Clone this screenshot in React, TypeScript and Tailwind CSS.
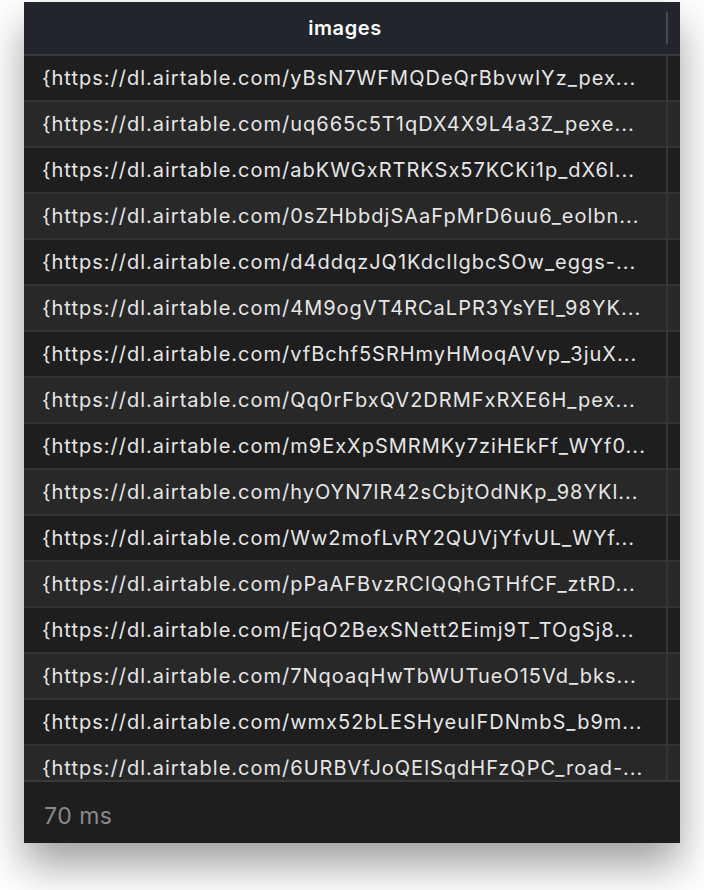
import React from "react";

const rows = [
  "{https://dl.airtable.com/yBsN7WFMQDeQrBbvwlYz_pex...",
  "{https://dl.airtable.com/uq665c5T1qDX4X9L4a3Z_pexe...",
  "{https://dl.airtable.com/abKWGxRTRKSx57KCKi1p_dX6l...",
  "{https://dl.airtable.com/0sZHbbdjSAaFpMrD6uu6_eolbn...",
  "{https://dl.airtable.com/d4ddqzJQ1KdcIlgbcSOw_eggs-...",
  "{https://dl.airtable.com/4M9ogVT4RCaLPR3YsYEl_98YK...",
  "{https://dl.airtable.com/vfBchf5SRHmyHMoqAVvp_3juX...",
  "{https://dl.airtable.com/Qq0rFbxQV2DRMFxRXE6H_pex...",
  "{https://dl.airtable.com/m9ExXpSMRMKy7ziHEkFf_WYf0...",
  "{https://dl.airtable.com/hyOYN7lR42sCbjtOdNKp_98YKl...",
  "{https://dl.airtable.com/Ww2mofLvRY2QUVjYfvUL_WYf...",
  "{https://dl.airtable.com/pPaAFBvzRClQQhGTHfCF_ztRD...",
  "{https://dl.airtable.com/EjqO2BexSNett2Eimj9T_TOgSj8...",
  "{https://dl.airtable.com/7NqoaqHwTbWUTueO15Vd_bks...",
  "{https://dl.airtable.com/wmx52bLESHyeuIFDNmbS_b9m...",
  "{https://dl.airtable.com/6URBVfJoQElSqdHFzQPC_road-...",
];

export default function App() {
  return (
    <div className="min-h-[890px] w-[704px] bg-white pt-[2px] pl-[24px]" style={{ fontFamily: "Inter, 'Noto Sans', sans-serif" }}>
      <div className="w-[656px] h-[841px] flex flex-col bg-[#1e1e1e] shadow-[0_22px_40px_rgba(0,0,0,0.38)]">
        <div className="h-[54px] shrink-0 flex bg-[#22252b] border-b-2 border-[#363940]">
          <div className="w-[642px] flex items-center justify-center text-[20px] font-semibold tracking-[0.6px] text-white">images</div>
          <div className="w-[2px] mt-[10px] h-[32px] bg-[#474a51]" />
          <div className="flex-1" />
        </div>
        <div className="h-[724px] shrink-0 overflow-hidden">
          {rows.map((r, i) => (
            <div
              key={i}
              className={`h-[46px] flex border-b-2 border-[#333333] ${i % 2 === 0 ? "bg-[#1e1e1e]" : "bg-[#282828]"}`}
            >
              <div className="w-[642px] pl-[18px] flex items-center text-[20px] tracking-[1px] text-[#e6e6e6] whitespace-nowrap overflow-hidden">
                {r}
              </div>
              <div className="w-[2px] bg-[#353535]" />
              <div className="flex-1" />
            </div>
          ))}
        </div>
        <div className="flex-1 border-t-2 border-[#3a3a3a] pl-[20px] pt-[19px] leading-[30px] text-[23px] tracking-[0.5px] text-[#8a8a8a]">
          70 ms
        </div>
      </div>
    </div>
  );
}
